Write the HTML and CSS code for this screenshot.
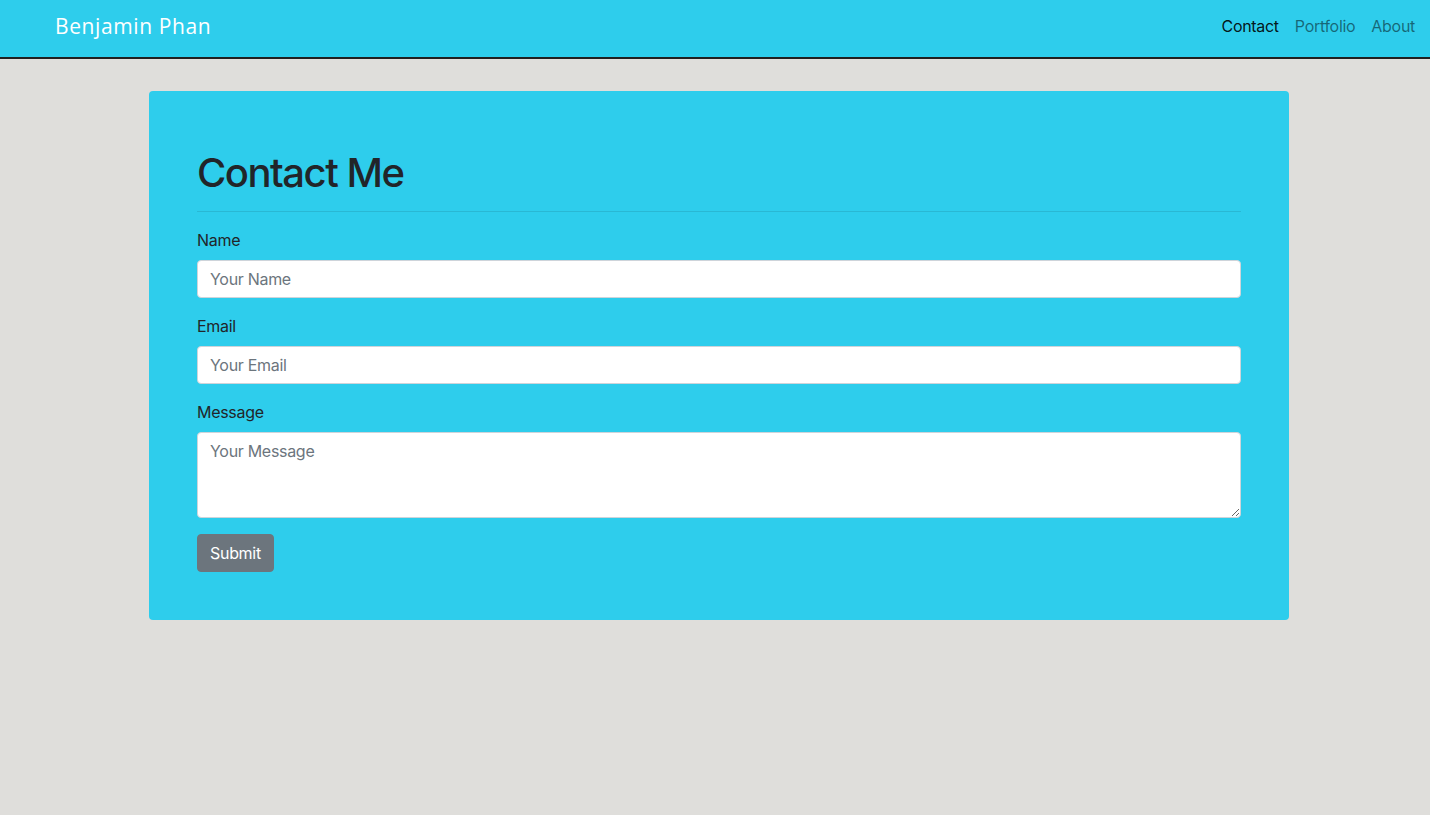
FILE: index.html
```html
<!DOCTYPE html>
<html lang="en">
<head>
<meta charset="utf-8">
<title>Contact - Benjamin Phan</title>
<link rel="stylesheet" href="styles.css">
</head>
<body>
<header class="navbar">
  <a class="brand" href="#">Benjamin Phan</a>
  <nav class="nav">
    <a class="nav-link active" href="#">Contact</a>
    <a class="nav-link" href="#">Portfolio</a>
    <a class="nav-link" href="#">About</a>
  </nav>
</header>
<main class="page">
  <section class="card">
    <h1 class="title">Contact Me</h1>
    <hr class="rule">
    <form class="form">
      <div class="group">
        <label class="label" for="name">Name</label>
        <input class="control" id="name" type="text" placeholder="Your Name">
      </div>
      <div class="group">
        <label class="label" for="email">Email</label>
        <input class="control" id="email" type="email" placeholder="Your Email">
      </div>
      <div class="group">
        <label class="label" for="msg">Message</label>
        <textarea class="control area" id="msg" placeholder="Your Message"></textarea>
      </div>
      <button class="btn" type="button">Submit</button>
    </form>
  </section>
</main>
</body>
</html>
```
FILE: styles.css
```css
* { box-sizing: border-box; }
html, body { margin: 0; padding: 0; }
body {
  background: #dfdedb;
  font-family: Inter, "Liberation Sans", sans-serif;
  font-size: 16px;
  line-height: 1.5;
  letter-spacing: -0.3px;
  color: #212529;
  min-height: 815px;
}
.navbar {
  height: 59px;
  background: #2ecdec;
  border-bottom: 2px solid #1f1f1f;
  display: flex;
  align-items: center;
  justify-content: space-between;
  padding: 0 7px 0 55px;
}
.brand {
  font-family: "Open Sans", sans-serif;
  font-size: 21px;
  color: #fff;
  text-decoration: none;
  letter-spacing: 0.6px;
  margin-top: -4px;
}
.nav { display: flex; margin-top: -6px; }
.nav-link {
  padding: 8px;
  color: rgba(0, 0, 0, 0.5);
  text-decoration: none;
}
.nav-link.active { color: rgba(0, 0, 0, 0.9); }
.page { padding: 32px 0 0 149px; }
.card {
  width: 1140px;
  background: #2ecdec;
  border-radius: 4px;
  padding: 48px;
}
.title {
  font-size: 40px;
  font-weight: 500;
  line-height: 48px;
  letter-spacing: -1.5px;
  margin: 10px 0 14px;
  color: #212529;
}
.rule {
  border: 0;
  border-top: 1px solid rgba(0, 0, 0, 0.1);
  margin: 0 0 16px;
}
.group { margin-bottom: 16px; }
.label { display: block; margin-bottom: 8px; }
.control {
  display: block;
  width: 100%;
  height: 38px;
  padding: 6px 12px;
  font: inherit;
  letter-spacing: -0.3px;
  color: #495057;
  background: #fff;
  border: 1px solid #ced4da;
  border-radius: 4px;
}
.control::placeholder { color: #6c757d; opacity: 1; }
.area { height: 86px; resize: vertical; }
.btn {
  font: inherit;
  letter-spacing: -0.3px;
  color: #fff;
  background: #6c757d;
  border: 1px solid #6c757d;
  border-radius: 4px;
  padding: 6px 12px;
  height: 38px;
}
```
